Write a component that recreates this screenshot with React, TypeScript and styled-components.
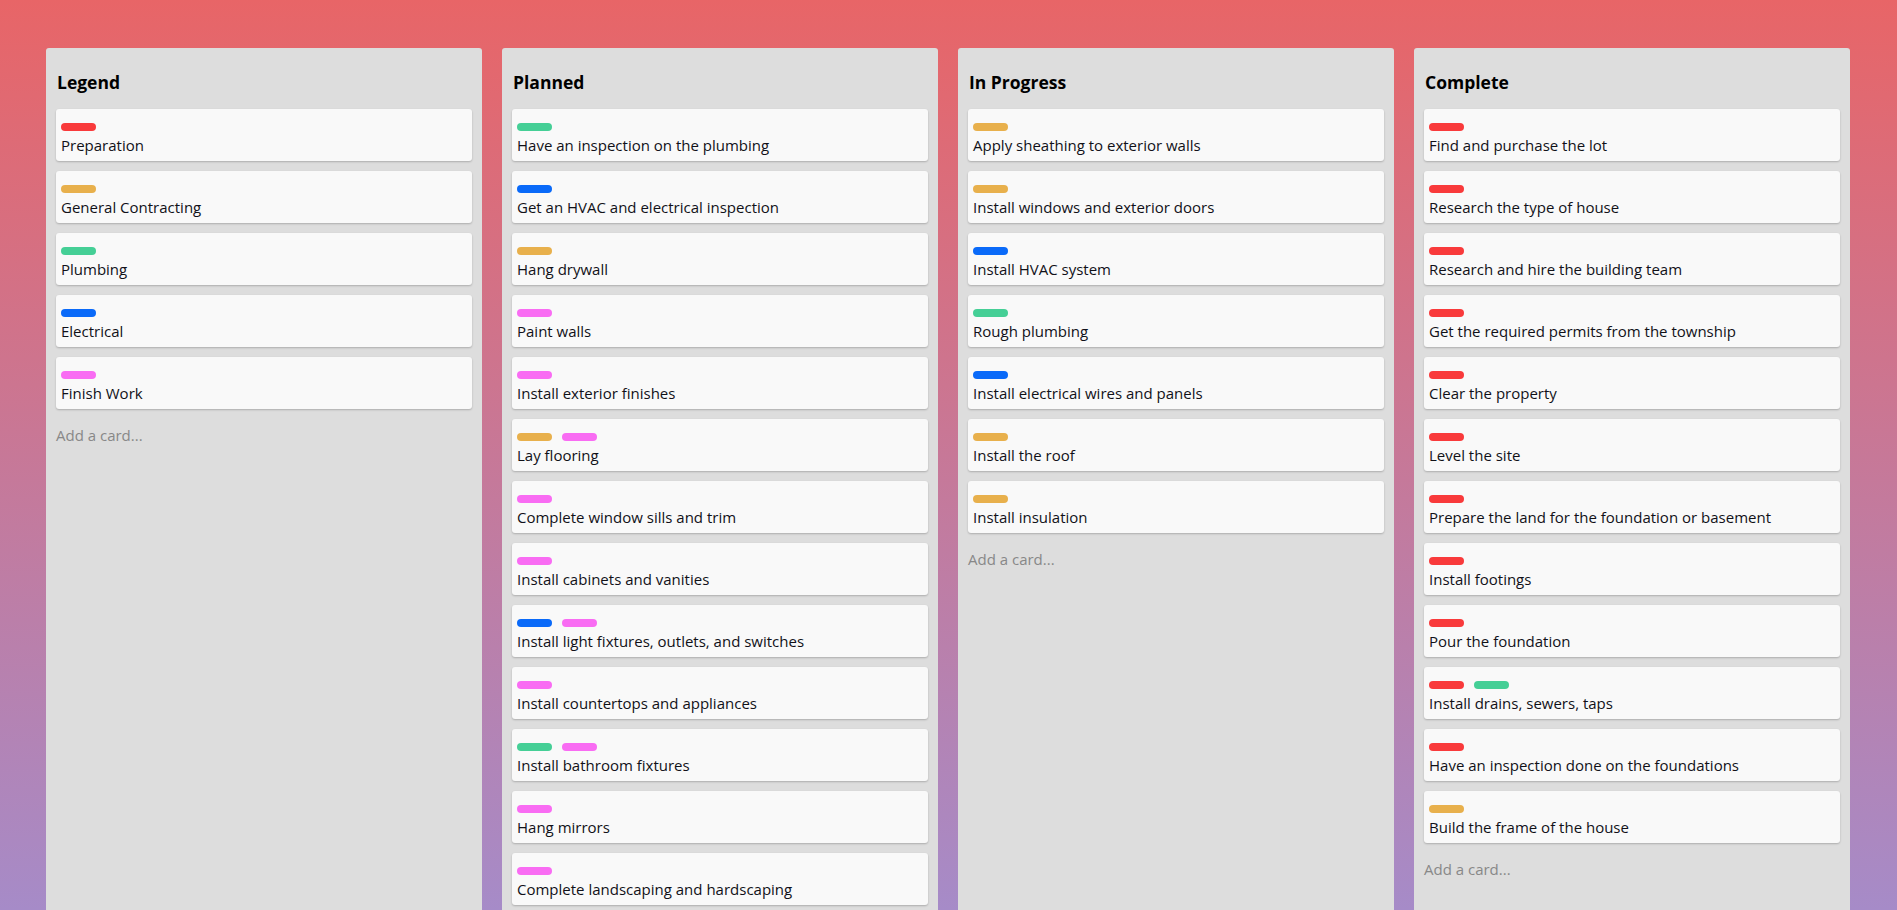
import React from "react";
import styled, { createGlobalStyle } from "styled-components";

const GlobalStyle = createGlobalStyle`
  html, body {
    margin: 0;
    padding: 0;
  }
  body {
    font-family: "Open Sans", "Noto Sans", sans-serif;
    background: linear-gradient(180deg, #e86567 0%, #a68bc8 100%) fixed;
    min-height: 100vh;
  }
  * { box-sizing: border-box; }
`;

type LabelKind = "red" | "orange" | "green" | "blue" | "pink";

const LABEL_COLORS: Record<LabelKind, string> = {
  red: "#f93a3b",
  orange: "#e8b04c",
  green: "#45cf96",
  blue: "#0a6af9",
  pink: "#f96cf3",
};

interface CardData {
  text: string;
  labels: LabelKind[];
}

interface ListData {
  title: string;
  cards: CardData[];
}

const LISTS: ListData[] = [
  {
    title: "Legend",
    cards: [
      { text: "Preparation", labels: ["red"] },
      { text: "General Contracting", labels: ["orange"] },
      { text: "Plumbing", labels: ["green"] },
      { text: "Electrical", labels: ["blue"] },
      { text: "Finish Work", labels: ["pink"] },
    ],
  },
  {
    title: "Planned",
    cards: [
      { text: "Have an inspection on the plumbing", labels: ["green"] },
      { text: "Get an HVAC and electrical inspection", labels: ["blue"] },
      { text: "Hang drywall", labels: ["orange"] },
      { text: "Paint walls", labels: ["pink"] },
      { text: "Install exterior finishes", labels: ["pink"] },
      { text: "Lay flooring", labels: ["orange", "pink"] },
      { text: "Complete window sills and trim", labels: ["pink"] },
      { text: "Install cabinets and vanities", labels: ["pink"] },
      { text: "Install light fixtures, outlets, and switches", labels: ["blue", "pink"] },
      { text: "Install countertops and appliances", labels: ["pink"] },
      { text: "Install bathroom fixtures", labels: ["green", "pink"] },
      { text: "Hang mirrors", labels: ["pink"] },
      { text: "Complete landscaping and hardscaping", labels: ["pink"] },
    ],
  },
  {
    title: "In Progress",
    cards: [
      { text: "Apply sheathing to exterior walls", labels: ["orange"] },
      { text: "Install windows and exterior doors", labels: ["orange"] },
      { text: "Install HVAC system", labels: ["blue"] },
      { text: "Rough plumbing", labels: ["green"] },
      { text: "Install electrical wires and panels", labels: ["blue"] },
      { text: "Install the roof", labels: ["orange"] },
      { text: "Install insulation", labels: ["orange"] },
    ],
  },
  {
    title: "Complete",
    cards: [
      { text: "Find and purchase the lot", labels: ["red"] },
      { text: "Research the type of house", labels: ["red"] },
      { text: "Research and hire the building team", labels: ["red"] },
      { text: "Get the required permits from the township", labels: ["red"] },
      { text: "Clear the property", labels: ["red"] },
      { text: "Level the site", labels: ["red"] },
      { text: "Prepare the land for the foundation or basement", labels: ["red"] },
      { text: "Install footings", labels: ["red"] },
      { text: "Pour the foundation", labels: ["red"] },
      { text: "Install drains, sewers, taps", labels: ["red", "green"] },
      { text: "Have an inspection done on the foundations", labels: ["red"] },
      { text: "Build the frame of the house", labels: ["orange"] },
    ],
  },
];

const Board = styled.main`
  display: flex;
  justify-content: flex-start;
  align-items: stretch;
  gap: 20px;
  padding: 48px 0 0 46px;
`;

const List = styled.section`
  width: 436px;
  flex: 0 0 436px;
  background: #dddddd;
  border-radius: 3px 3px 0 0;
  padding: 22px 10px 12px;
  display: flex;
  flex-direction: column;
`;

const ListTitle = styled.h2`
  margin: 0 0 15px;
  font-size: 17.5px;
  line-height: 24px;
  font-weight: 700;
  color: #000;
  padding-left: 1px;
`;

const Cards = styled.div`
  display: flex;
  flex-direction: column;
  gap: 10px;
`;

const Card = styled.article`
  background: #f9f9f9;
  border-radius: 3px;
  padding: 14px 5px 6px;
  box-shadow: 0 1px 2px rgba(0, 0, 0, 0.22);
`;

const Labels = styled.div`
  display: flex;
  gap: 10px;
  margin-bottom: 4px;
`;

const Label = styled.span<{ $color: string }>`
  display: block;
  width: 35px;
  height: 8px;
  border-radius: 4px;
  background: ${(p) => p.$color};
`;

const CardText = styled.div`
  font-size: 15px;
  line-height: 20px;
  color: #111118;
`;

const AddCard = styled.div`
  margin-top: 16px;
  font-size: 15px;
  line-height: 20px;
  color: #888888;
`;

export default function App() {
  return (
    <>
      <GlobalStyle />
      <Board>
        {LISTS.map((list) => (
          <List key={list.title}>
            <ListTitle>{list.title}</ListTitle>
            <Cards>
              {list.cards.map((card) => (
                <Card key={card.text}>
                  <Labels>
                    {card.labels.map((l, i) => (
                      <Label key={i} $color={LABEL_COLORS[l]} />
                    ))}
                  </Labels>
                  <CardText>{card.text}</CardText>
                </Card>
              ))}
            </Cards>
            <AddCard>Add a card...</AddCard>
          </List>
        ))}
      </Board>
    </>
  );
}
